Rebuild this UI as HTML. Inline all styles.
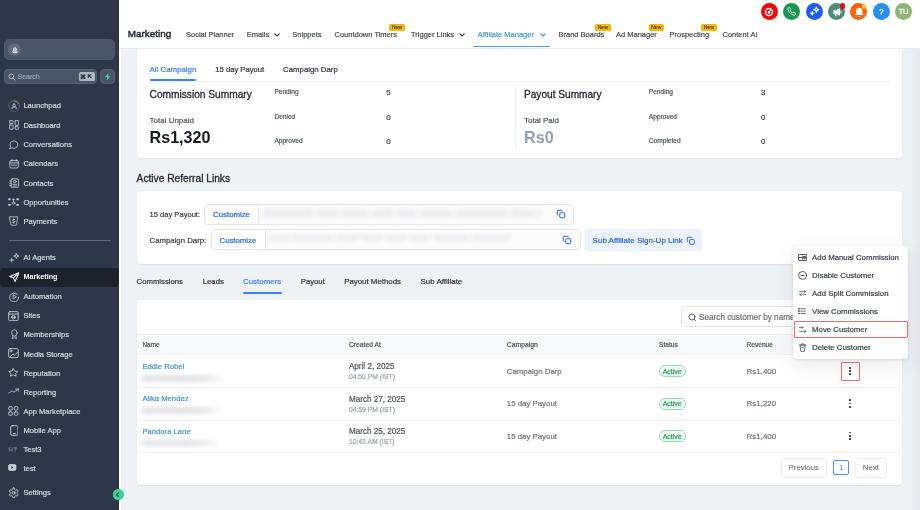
<!DOCTYPE html>
<html><head><meta charset="utf-8">
<style>
*{box-sizing:border-box;margin:0;padding:0}
html,body{width:920px;height:510px;overflow:hidden;background:#eff2f5}
body{position:relative;font-family:"Liberation Sans",sans-serif;color:#1f2937}
#root{position:absolute;left:0;top:0;width:920px;height:510px;will-change:transform;background:#eff2f5;overflow:hidden}
.a{position:absolute;white-space:nowrap;-webkit-text-stroke-width:0.2px}
</style></head><body>
<div id="root">
<div class="a" style="left:0.00px;top:0.00px;width:119.00px;height:510.00px;background:#2d3748"></div>
<div class="a" style="left:119.00px;top:0.00px;width:801.00px;height:49.00px;background:#fff;border-bottom:1px solid #e6e9ed"></div>
<div class="a" style="left:119.00px;top:49.00px;width:2.00px;height:461.00px;background:#fff"></div>
<div class="a" style="left:900.00px;top:49.00px;width:20.00px;height:461.00px;background:linear-gradient(90deg,#eff2f5 0%,#eef1f4 55%,#e3e6ea 100%)"></div>
<div class="a" style="left:4.00px;top:38.50px;width:111.00px;height:21.50px;background:#4a5567;border-radius:5px;border:1px solid #4f5a6c"></div>
<div class="a" style="left:8.10px;top:42.90px;width:13.40px;height:13.40px;border-radius:50%;background:#5f6a7b"></div>
<svg class="a" style="left:10.80px;top:45.60px" width="8" height="8" viewBox="0 0 24 24" ><path d="M7.5 9.5a4.5 4.5 0 0 1 9 0v2.5a4.5 4.5 0 0 1-9 0z" fill="#aeb6c1" stroke="#e8ecf1" stroke-width="2.4"/><path d="M3 16.5c1 3.5 4.5 5.5 9 5.5s8-2 9-5.5c-1.5-.8-3-.8-4 .2-1.2 1.3-2.8 2-5 2s-3.8-.7-5-2c-1-1-2.5-1-4-.2z" fill="#e8ecf1"/></svg>
<div class="a" style="left:4.00px;top:69.00px;width:93.00px;height:15.00px;background:#4a5567;border-radius:4px;border:1px solid #566173"></div>
<svg class="a" style="left:7.50px;top:72.50px" width="8" height="8" viewBox="0 0 24 24" fill="none" stroke="#c5ccd6" stroke-width="2.6" stroke-linecap="round"><circle cx="10" cy="10" r="7"/><path d="m21 21-6-6"/></svg>
<div class="a" style="left:17.50px;top:73px;font-size:7px;line-height:7px;color:#98a2af;font-weight:normal;-webkit-text-stroke-width:0.2px;">Search</div>
<div class="a" style="left:79.00px;top:72.00px;width:15.50px;height:9.00px;background:#aeb6c1;border-radius:1.5px"></div>
<div class="a" style="left:80.3px;top:72px;font-size:6.3px;line-height:9px;color:#1f2733;-webkit-text-stroke-width:0.35px">&#8984;</div>
<div class="a" style="left:87.5px;top:72px;font-size:6px;line-height:9px;color:#1f2733;font-weight:bold">K</div>
<div class="a" style="left:100.00px;top:69.00px;width:15.00px;height:15.00px;background:#4a5567;border-radius:4px;border:1px solid #566173"></div>
<svg class="a" style="left:103.80px;top:72.80px" width="7.4" height="7.4" viewBox="0 0 16 16" ><path d="M10 0 2 9h5l-1 7 8-9H9z" fill="#3ddc97"/></svg>
<div class="a" style="left:0.00px;top:267.60px;width:119.00px;height:19.00px;background:#1c212c;border-radius:4px"></div>
<div class="a" style="left:8.50px;top:239.50px;width:102.00px;height:1.00px;background:#5d6878"></div>
<svg class="a" style="left:7.89px;top:100.09px" width="12.22" height="12.22" viewBox="0 0 24 24" fill="none" stroke="#c9cfd8" stroke-width="2.0" stroke-linecap="round" stroke-linejoin="round" preserveAspectRatio="none"><circle cx="12" cy="12" r="10.5" stroke="#5c687a" stroke-width="1.5"/><path d="M12 1.5A10.5 10.5 0 0 1 21.4 7.3" stroke="#e0833a" stroke-width="1.7"/><path d="M12 5.5c2.3 1.7 3.2 4.2 3.2 6.8l-.8 2.7h-4.8l-.8-2.7c0-2.6.9-5.1 3.2-6.8z" fill="#939cab" stroke="none"/><path d="M8.8 12.5 6.5 15v2.5h3zM15.2 12.5l2.3 2.5v2.5h-3z" fill="#939cab" stroke="none"/><circle cx="12" cy="10.5" r="1.3" fill="#2d3748" stroke="none"/></svg>
<div class="a" style="left:23.40px;top:102px;font-size:7.6px;line-height:7.6px;color:#d5dae1;font-weight:normal;-webkit-text-stroke-width:0.2px;">Launchpad</div>
<svg class="a" style="left:8.67px;top:120.49px" width="10.25" height="9.82" viewBox="0 0 24 24" fill="none" stroke="#c9cfd8" stroke-width="2.0" stroke-linecap="round" stroke-linejoin="round" preserveAspectRatio="none"><rect x="1.5" y="1.5" width="8" height="7" rx="0.8"/><rect x="1.5" y="12" width="8" height="10.5" rx="0.8"/><rect x="14.5" y="1.5" width="8" height="11.5" rx="0.8"/><rect x="14.5" y="16.5" width="8" height="6" rx="0.8"/></svg>
<div class="a" style="left:23.40px;top:122px;font-size:7.6px;line-height:7.6px;color:#d5dae1;font-weight:normal;-webkit-text-stroke-width:0.2px;">Dashboard</div>
<svg class="a" style="left:9.09px;top:139.71px" width="9.82" height="9.38" viewBox="0 0 24 24" fill="none" stroke="#c9cfd8" stroke-width="2.0" stroke-linecap="round" stroke-linejoin="round" preserveAspectRatio="none"><path d="M7.9 20.5A9.5 9.5 0 1 0 3.6 16.4L1.5 22.5Z"/></svg>
<div class="a" style="left:23.40px;top:141px;font-size:7.6px;line-height:7.6px;color:#d5dae1;font-weight:normal;-webkit-text-stroke-width:0.2px;">Conversations</div>
<svg class="a" style="left:8.67px;top:159.29px" width="10.25" height="9.82" viewBox="0 0 24 24" fill="none" stroke="#c9cfd8" stroke-width="2.0" stroke-linecap="round" stroke-linejoin="round" preserveAspectRatio="none"><rect x="2" y="3.5" width="20" height="18.5" rx="3.5"/><path d="M7 1.5v4M17 1.5v4M2 9.5h20M6 15h12"/></svg>
<div class="a" style="left:23.40px;top:160px;font-size:7.6px;line-height:7.6px;color:#d5dae1;font-weight:normal;-webkit-text-stroke-width:0.2px;">Calendars</div>
<svg class="a" style="left:8.67px;top:177.65px" width="10.25" height="10.8" viewBox="0 0 24 24" fill="none" stroke="#c9cfd8" stroke-width="2.0" stroke-linecap="round" stroke-linejoin="round" preserveAspectRatio="none"><rect x="5" y="2" width="17" height="20" rx="2.5"/><ellipse cx="13.5" cy="8" rx="3.5" ry="2.2"/><path d="M9 14h9M9 18h9M1.5 6.5h3M1.5 11.5h3M1.5 16.5h3"/></svg>
<div class="a" style="left:23.40px;top:180px;font-size:7.6px;line-height:7.6px;color:#d5dae1;font-weight:normal;-webkit-text-stroke-width:0.2px;">Contacts</div>
<svg class="a" style="left:8.24px;top:198.16px" width="11.13" height="8.18" viewBox="0 0 24 24" fill="none" stroke="#c9cfd8" stroke-width="2.0" stroke-linecap="round" stroke-linejoin="round" preserveAspectRatio="none"><rect x="0.5" y="1" width="5.5" height="5.5" rx="1.2" fill="#c9cfd8" stroke="none"/><rect x="18" y="1" width="5.5" height="5.5" rx="1.2" fill="#c9cfd8" stroke="none"/><rect x="0.5" y="17.5" width="5.5" height="5.5" rx="1.2" fill="#c9cfd8" stroke="none"/><rect x="18" y="17.5" width="5.5" height="5.5" rx="1.2" fill="#c9cfd8" stroke="none"/><circle cx="12" cy="4" r="2.6" fill="#c9cfd8" stroke="none"/><circle cx="12" cy="15" r="3.2"/><path d="M12 6.5v5"/></svg>
<div class="a" style="left:23.40px;top:199px;font-size:7.6px;line-height:7.6px;color:#d5dae1;font-weight:normal;-webkit-text-stroke-width:0.2px;">Opportunities</div>
<svg class="a" style="left:9.11px;top:216.49px" width="9.38" height="9.93" viewBox="0 0 24 24" fill="none" stroke="#c9cfd8" stroke-width="2.0" stroke-linecap="round" stroke-linejoin="round" preserveAspectRatio="none"><path d="M2 2h20l-2.5 19a1.5 1.5 0 0 1-1.5 1.3H6a1.5 1.5 0 0 1-1.5-1.3z"/><path d="M14.5 8.5h-3.5a1.7 1.7 0 0 0 0 3.4h2a1.7 1.7 0 0 1 0 3.4h-3.5M12 6.5v2M12 15.3v2"/></svg>
<div class="a" style="left:23.40px;top:218px;font-size:7.6px;line-height:7.6px;color:#d5dae1;font-weight:normal;-webkit-text-stroke-width:0.2px;">Payments</div>
<svg class="a" style="left:8.55px;top:253.10px" width="10.69" height="9.6" viewBox="0 0 24 24" fill="none" stroke="#c9cfd8" stroke-width="2.0" stroke-linecap="round" stroke-linejoin="round" preserveAspectRatio="none"><path d="M16.5 1.5l1.6 4.4 4.4 1.6-4.4 1.6-1.6 4.4-1.6-4.4-4.4-1.6 4.4-1.6z"/><path d="M6 13v9.5M1.5 17.7h9"/></svg>
<div class="a" style="left:23.40px;top:254px;font-size:7.6px;line-height:7.6px;color:#d5dae1;font-weight:normal;-webkit-text-stroke-width:0.2px;">AI Agents</div>
<svg class="a" style="left:8.55px;top:271.78px" width="10.69" height="10.15" viewBox="0 0 24 24" fill="none" stroke="#ffffff" stroke-width="2.3" stroke-linecap="round" stroke-linejoin="round" preserveAspectRatio="none"><path d="M22.5 1.5 1.5 10.5l8.5 3.5 3.5 8.5z"/><path d="M22.5 1.5 10 14"/></svg>
<div class="a" style="left:23.50px;top:273px;font-size:7.2px;line-height:7.2px;color:#ffffff;font-weight:bold;-webkit-text-stroke-width:0px;">Marketing</div>
<svg class="a" style="left:8.57px;top:291.58px" width="10.36" height="10.15" viewBox="0 0 24 24" fill="none" stroke="#c9cfd8" stroke-width="2.0" stroke-linecap="round" stroke-linejoin="round" preserveAspectRatio="none"><path d="M19.5 5.5A10.5 10.5 0 1 0 22.5 12"/><path d="M9.5 7.5v9l7-4.5z"/></svg>
<div class="a" style="left:23.40px;top:293px;font-size:7.6px;line-height:7.6px;color:#d5dae1;font-weight:normal;-webkit-text-stroke-width:0.2px;">Automation</div>
<svg class="a" style="left:8.35px;top:310.57px" width="10.91" height="10.36" viewBox="0 0 24 24" fill="none" stroke="#c9cfd8" stroke-width="2.0" stroke-linecap="round" stroke-linejoin="round" preserveAspectRatio="none"><rect x="1.5" y="1.5" width="21" height="21" rx="2.5"/><path d="M1.5 7h21"/><circle cx="12" cy="14.5" r="4"/><path d="M8 14.5h8"/></svg>
<div class="a" style="left:23.40px;top:312px;font-size:7.6px;line-height:7.6px;color:#d5dae1;font-weight:normal;-webkit-text-stroke-width:0.2px;">Sites</div>
<svg class="a" style="left:9.54px;top:329.16px" width="8.73" height="10.47" viewBox="0 0 24 24" fill="none" stroke="#c9cfd8" stroke-width="2.0" stroke-linecap="round" stroke-linejoin="round" preserveAspectRatio="none"><circle cx="12" cy="9" r="7.5"/><path d="M8 15.5 6 22.5l6-3 6 3-2-7"/></svg>
<div class="a" style="left:23.40px;top:331px;font-size:7.6px;line-height:7.6px;color:#d5dae1;font-weight:normal;-webkit-text-stroke-width:0.2px;">Memberships</div>
<svg class="a" style="left:8.35px;top:348.47px" width="10.91" height="10.25" viewBox="0 0 24 24" fill="none" stroke="#c9cfd8" stroke-width="2.0" stroke-linecap="round" stroke-linejoin="round" preserveAspectRatio="none"><rect x="1.5" y="1.5" width="21" height="21" rx="3"/><path d="M7 4.5v5M4.5 7h5M4 21l7-7 3 3 7-7"/></svg>
<div class="a" style="left:23.40px;top:351px;font-size:7.6px;line-height:7.6px;color:#d5dae1;font-weight:normal;-webkit-text-stroke-width:0.2px;">Media Storage</div>
<svg class="a" style="left:8.36px;top:368.41px" width="10.58" height="9.27" viewBox="0 0 24 24" fill="none" stroke="#c9cfd8" stroke-width="2.0" stroke-linecap="round" stroke-linejoin="round" preserveAspectRatio="none"><path d="M12 1.5l3.2 6.5 7.2 1-5.2 5.1 1.2 7.1L12 17.8l-6.4 3.4 1.2-7.1L1.6 9l7.2-1z"/></svg>
<div class="a" style="left:23.40px;top:370px;font-size:7.6px;line-height:7.6px;color:#d5dae1;font-weight:normal;-webkit-text-stroke-width:0.2px;">Reputation</div>
<svg class="a" style="left:8.02px;top:388.39px" width="11.45" height="7.42" viewBox="0 0 24 24" fill="none" stroke="#c9cfd8" stroke-width="2.0" stroke-linecap="round" stroke-linejoin="round" preserveAspectRatio="none"><path d="M1.5 16.5l7-7 4 4 10-10M15.5 3.5h7v7"/></svg>
<div class="a" style="left:23.40px;top:389px;font-size:7.6px;line-height:7.6px;color:#d5dae1;font-weight:normal;-webkit-text-stroke-width:0.2px;">Reporting</div>
<svg class="a" style="left:8.36px;top:406.49px" width="10.58" height="9.93" viewBox="0 0 24 24" fill="none" stroke="#c9cfd8" stroke-width="2.0" stroke-linecap="round" stroke-linejoin="round" preserveAspectRatio="none"><rect x="1.5" y="1.5" width="8.5" height="8.5" rx="3"/><rect x="14" y="1.5" width="8.5" height="8.5" rx="3"/><rect x="1.5" y="14" width="8.5" height="8.5" rx="3"/><rect x="14" y="14" width="8.5" height="8.5" rx="3"/></svg>
<div class="a" style="left:23.40px;top:408px;font-size:7.6px;line-height:7.6px;color:#d5dae1;font-weight:normal;-webkit-text-stroke-width:0.2px;">App Marketplace</div>
<svg class="a" style="left:9.77px;top:425.04px" width="8.72" height="11.02" viewBox="0 0 18 24" fill="none" stroke="#c9cfd8" stroke-width="2.0" stroke-linecap="round" stroke-linejoin="round" preserveAspectRatio="none"><rect x="1.5" y="1.5" width="15" height="21" rx="3"/><path d="M7 18.5h4"/></svg>
<div class="a" style="left:23.40px;top:427px;font-size:7.6px;line-height:7.6px;color:#d5dae1;font-weight:normal;-webkit-text-stroke-width:0.2px;">Mobile App</div>
<div class="a" style="left:7.9px;top:446.2px;font-size:5px;line-height:7px;color:#8c95a2;-webkit-text-stroke-width:0">知乎</div>
<div class="a" style="left:23.40px;top:446px;font-size:7.6px;line-height:7.6px;color:#d5dae1;font-weight:normal;-webkit-text-stroke-width:0.2px;">Test3</div>
<svg class="a" style="left:8.05px;top:464.14px" width="8.51" height="7.02" viewBox="0 0 24 19.4" fill="none" stroke="#c9cfd8" stroke-width="2.0" stroke-linecap="round" stroke-linejoin="round" preserveAspectRatio="none"><rect x="1.5" y="1.5" width="21" height="16.4" rx="4" fill="#c9cfd8"/><path d="M9.5 5.5v8l6-4z" fill="#2d3748" stroke="none"/></svg>
<div class="a" style="left:23.40px;top:465px;font-size:7.6px;line-height:7.6px;color:#d5dae1;font-weight:normal;-webkit-text-stroke-width:0.2px;">test</div>
<svg class="a" style="left:7.93px;top:486.71px" width="11.35" height="11.78" viewBox="0 0 24 24" fill="none" stroke="#c9cfd8" stroke-width="2.0" stroke-linecap="round" stroke-linejoin="round" preserveAspectRatio="none"><path d="M12.22 2h-.44a2 2 0 0 0-2 2v.18a2 2 0 0 1-1 1.73l-.43.25a2 2 0 0 1-2 0l-.15-.08a2 2 0 0 0-2.73.73l-.22.38a2 2 0 0 0 .73 2.73l.15.1a2 2 0 0 1 1 1.72v.51a2 2 0 0 1-1 1.74l-.15.09a2 2 0 0 0-.73 2.730l.22.38a2 2 0 0 0 2.73.73l.15-.08a2 2 0 0 1 2 0l.43.25a2 2 0 0 1 1 1.73V20a2 2 0 0 0 2 2h.44a2 2 0 0 0 2-2v-.18a2 2 0 0 1 1-1.73l.43-.25a2 2 0 0 1 2 0l.15.08a2 2 0 0 0 2.73-.73l.22-.39a2 2 0 0 0-.73-2.73l-.15-.08a2 2 0 0 1-1-1.74v-.5a2 2 0 0 1 1-1.74l.15-.09a2 2 0 0 0 .73-2.73l-.22-.38a2 2 0 0 0-2.73-.73l-.15.08a2 2 0 0 1-2 0l-.43-.25a2 2 0 0 1-1-1.73V4a2 2 0 0 0-2-2z"/><circle cx="12" cy="12" r="3"/></svg>
<div class="a" style="left:23.40px;top:489px;font-size:7.6px;line-height:7.6px;color:#d5dae1;font-weight:normal;-webkit-text-stroke-width:0.2px;">Settings</div>
<div class="a" style="left:112.60px;top:488.80px;width:11.20px;height:11.20px;border-radius:50%;background:#38d39b;box-shadow:0 0 1px rgba(255,255,255,0.5)"></div>
<svg class="a" style="left:115.00px;top:491.80px" width="5.4" height="5.4" viewBox="0 0 12 12" fill="none" stroke="#0d5c40" stroke-width="2.8" stroke-linecap="round" stroke-linejoin="round"><path d="M8 1.5 3.5 6 8 10.5"/></svg>
<div class="a" style="left:127.80px;top:29px;font-size:9.9px;line-height:9.9px;color:#1e2633;font-weight:normal;-webkit-text-stroke-width:0.45px;">Marketing</div>
<div class="a" style="left:186.00px;top:31px;font-size:7.5px;line-height:7.5px;color:#444c59;font-weight:normal;-webkit-text-stroke-width:0.2px;">Social Planner</div>
<div class="a" style="left:246.70px;top:31px;font-size:7.5px;line-height:7.5px;color:#444c59;font-weight:normal;-webkit-text-stroke-width:0.2px;">Emails</div>
<svg class="a" style="left:274.20px;top:33.00px" width="6" height="4" viewBox="0 0 12 8" fill="none" stroke="#444c59" stroke-width="2.2" stroke-linecap="round" stroke-linejoin="round"><path d="M1.5 1.5 6 6l4.5-4.5"/></svg>
<div class="a" style="left:292.30px;top:31px;font-size:7.5px;line-height:7.5px;color:#444c59;font-weight:normal;-webkit-text-stroke-width:0.2px;">Snippets</div>
<div class="a" style="left:334.50px;top:31px;font-size:7.5px;line-height:7.5px;color:#444c59;font-weight:normal;-webkit-text-stroke-width:0.2px;">Countdown Timers</div>
<div class="a" style="left:411.00px;top:31px;font-size:7.5px;line-height:7.5px;color:#444c59;font-weight:normal;-webkit-text-stroke-width:0.2px;">Trigger Links</div>
<svg class="a" style="left:459.00px;top:33.00px" width="6" height="4" viewBox="0 0 12 8" fill="none" stroke="#444c59" stroke-width="2.2" stroke-linecap="round" stroke-linejoin="round"><path d="M1.5 1.5 6 6l4.5-4.5"/></svg>
<div class="a" style="left:477.80px;top:31px;font-size:7.5px;line-height:7.5px;color:#3f9ae0;font-weight:normal;-webkit-text-stroke-width:0.2px;">Affiliate Manager</div>
<svg class="a" style="left:539.60px;top:33.00px" width="6" height="4" viewBox="0 0 12 8" fill="none" stroke="#3f9ae0" stroke-width="2.2" stroke-linecap="round" stroke-linejoin="round"><path d="M1.5 1.5 6 6l4.5-4.5"/></svg>
<div class="a" style="left:558.50px;top:31px;font-size:7.5px;line-height:7.5px;color:#444c59;font-weight:normal;-webkit-text-stroke-width:0.2px;">Brand Boards</div>
<div class="a" style="left:616.00px;top:31px;font-size:7.5px;line-height:7.5px;color:#444c59;font-weight:normal;-webkit-text-stroke-width:0.2px;">Ad Manager</div>
<div class="a" style="left:669.50px;top:31px;font-size:7.5px;line-height:7.5px;color:#444c59;font-weight:normal;-webkit-text-stroke-width:0.2px;">Prospecting</div>
<div class="a" style="left:722.50px;top:31px;font-size:7.5px;line-height:7.5px;color:#444c59;font-weight:normal;-webkit-text-stroke-width:0.2px;">Content AI</div>
<div class="a" style="left:389.20px;top:24.30px;width:15.50px;height:6.40px;background:#f7b800;border-radius:1.5px"></div>
<div class="a" style="left:389.2px;top:24.3px;width:15.5px;text-align:center;font-size:5px;line-height:6.4px;color:#3a3000;-webkit-text-stroke-width:0.1px">New</div>
<div class="a" style="left:595.00px;top:24.30px;width:15.50px;height:6.40px;background:#f7b800;border-radius:1.5px"></div>
<div class="a" style="left:595.0px;top:24.3px;width:15.5px;text-align:center;font-size:5px;line-height:6.4px;color:#3a3000;-webkit-text-stroke-width:0.1px">New</div>
<div class="a" style="left:648.50px;top:24.30px;width:15.50px;height:6.40px;background:#f7b800;border-radius:1.5px"></div>
<div class="a" style="left:648.5px;top:24.3px;width:15.5px;text-align:center;font-size:5px;line-height:6.4px;color:#3a3000;-webkit-text-stroke-width:0.1px">New</div>
<div class="a" style="left:701.00px;top:24.30px;width:15.50px;height:6.40px;background:#f7b800;border-radius:1.5px"></div>
<div class="a" style="left:701.0px;top:24.3px;width:15.5px;text-align:center;font-size:5px;line-height:6.4px;color:#3a3000;-webkit-text-stroke-width:0.1px">New</div>
<div class="a" style="left:473.30px;top:45.50px;width:76.60px;height:1.60px;background:#48a0e0"></div>
<div class="a" style="left:760.80px;top:3.30px;width:17.20px;height:17.20px;border-radius:50%;background:#fa0000"></div>
<svg class="a" style="left:764.40px;top:6.90px" width="10" height="10" viewBox="0 0 24 24" fill="none" stroke="#fff" stroke-width="3.4" stroke-linecap="round"><circle cx="12" cy="12" r="8.5"/><path d="M12 13l3.5-5.5" stroke-width="2.6"/><circle cx="12" cy="13" r="1.6" fill="#fff"/></svg>
<div class="a" style="left:783.20px;top:3.30px;width:17.20px;height:17.20px;border-radius:50%;background:#179a4e"></div>
<svg class="a" style="left:787.30px;top:7.40px" width="9" height="9" viewBox="0 0 24 24" fill="none" stroke="#fff" stroke-width="2.2" stroke-linejoin="round"><path d="M22 16.9v3a2 2 0 0 1-2.2 2 19.8 19.8 0 0 1-8.6-3.1 19.5 19.5 0 0 1-6-6A19.8 19.8 0 0 1 2.1 4.2 2 2 0 0 1 4.1 2h3a2 2 0 0 1 2 1.7c.1 1 .4 1.9.7 2.8a2 2 0 0 1-.5 2.1L8 9.9a16 16 0 0 0 6 6l1.3-1.3a2 2 0 0 1 2.1-.4c.9.3 1.8.6 2.8.7a2 2 0 0 1 1.7 2z"/></svg>
<div class="a" style="left:805.60px;top:3.30px;width:17.20px;height:17.20px;border-radius:50%;background:#1d5cf2"></div>
<svg class="a" style="left:808.70px;top:6.40px" width="11" height="11" viewBox="0 0 24 24" fill="none" stroke="#fff" stroke-width="2.2" stroke-linejoin="round"><path d="M16 2l1.5 4.5L22 8l-4.5 1.5L16 14l-1.5-4.5L10 8l4.5-1.5z"/><path d="M7 12l1 3 3 1-3 1-1 3-1-3-3-1 3-1z"/></svg>
<div class="a" style="left:827.90px;top:3.30px;width:17.20px;height:17.20px;border-radius:50%;background:#4b8e78"></div>
<svg class="a" style="left:831.50px;top:6.90px" width="10" height="10" viewBox="0 0 24 24" ><path d="M3 8h5l11-5v18L8 16H3z" fill="#fff"/><path d="M6 16l2 6h3.5l-2-6z" fill="#fff"/><path d="M21 9v6" stroke="#fff" stroke-width="2"/></svg>
<div class="a" style="left:850.20px;top:3.30px;width:17.20px;height:17.20px;border-radius:50%;background:#ff610d"></div>
<svg class="a" style="left:853.55px;top:6.65px" width="10.5" height="10.5" viewBox="0 0 24 24" ><path d="M12 1.5a7 7 0 0 0-7 7v6.5l-2.5 3.5h19L19 15V8.5a7 7 0 0 0-7-7z" fill="#fff"/><path d="M9.5 20.5a2.5 2.5 0 0 0 5 0z" fill="#fff"/></svg>
<div class="a" style="left:872.80px;top:3.30px;width:17.20px;height:17.20px;border-radius:50%;background:#2590f2"></div>
<div class="a" style="left:894.90px;top:3.30px;width:17.20px;height:17.20px;border-radius:50%;background:#8ab672"></div>
<div class="a" style="left:876.4px;top:6px;width:10px;text-align:center;font-size:8.6px;line-height:12px;font-weight:bold;color:#fff;-webkit-text-stroke-width:0">?</div>
<div class="a" style="left:895px;top:7px;width:17px;text-align:center;font-size:7.6px;line-height:10px;color:#f2f7ef;-webkit-text-stroke-width:0.35px">TU</div>
<div class="a" style="left:839.60px;top:3.30px;width:5.40px;height:5.40px;border-radius:50%;background:#f2000f"></div>
<div class="a" style="left:862.00px;top:4.30px;width:4.40px;height:4.40px;border-radius:50%;background:#f7c520"></div>
<div class="a" style="left:136.70px;top:49.00px;width:765.70px;height:109.00px;background:#fff;border-radius:0 0 4px 4px;box-shadow:0 1px 2px rgba(16,24,40,0.07)"></div>
<div class="a" style="left:149.60px;top:66px;font-size:7.85px;line-height:7.85px;color:#3b82f6;font-weight:normal;-webkit-text-stroke-width:0.2px;">All Campaign</div>
<div class="a" style="left:215.30px;top:66px;font-size:7.65px;line-height:7.65px;color:#2b3340;font-weight:normal;-webkit-text-stroke-width:0.2px;">15 day Payout</div>
<div class="a" style="left:283.10px;top:66px;font-size:7.82px;line-height:7.82px;color:#2b3340;font-weight:normal;-webkit-text-stroke-width:0.2px;">Campaign Darp</div>
<div class="a" style="left:149.60px;top:78.50px;width:46.60px;height:2.00px;background:#3b82f6;border-radius:1px"></div>
<div class="a" style="left:149.60px;top:80.50px;width:740.00px;height:1.00px;background:#eef0f3"></div>
<div class="a" style="left:149.60px;top:90px;font-size:10.16px;line-height:10.16px;color:#1e2633;font-weight:normal;-webkit-text-stroke-width:0.3px;">Commission Summary</div>
<div class="a" style="left:149.60px;top:117px;font-size:7.97px;line-height:7.97px;color:#4b5563;font-weight:normal;-webkit-text-stroke-width:0.2px;">Total Unpaid</div>
<div class="a" style="left:149.60px;top:129px;font-size:16.1px;line-height:16.1px;color:#111827;font-weight:bold;-webkit-text-stroke-width:0px;">Rs1,320</div>
<div class="a" style="left:274.40px;top:89px;font-size:6.6px;line-height:6.6px;color:#4b5563;font-weight:normal;-webkit-text-stroke-width:0.2px;">Pending</div>
<div class="a" style="left:386.30px;top:89px;font-size:7.9px;line-height:7.9px;color:#374151;font-weight:normal;-webkit-text-stroke-width:0.2px;">5</div>
<div class="a" style="left:274.40px;top:114px;font-size:6.6px;line-height:6.6px;color:#4b5563;font-weight:normal;-webkit-text-stroke-width:0.2px;">Denied</div>
<div class="a" style="left:386.30px;top:114px;font-size:7.9px;line-height:7.9px;color:#374151;font-weight:normal;-webkit-text-stroke-width:0.2px;">0</div>
<div class="a" style="left:274.40px;top:138px;font-size:6.6px;line-height:6.6px;color:#4b5563;font-weight:normal;-webkit-text-stroke-width:0.2px;">Approved</div>
<div class="a" style="left:386.30px;top:138px;font-size:7.9px;line-height:7.9px;color:#374151;font-weight:normal;-webkit-text-stroke-width:0.2px;">0</div>
<div class="a" style="left:514.60px;top:87.30px;width:1.00px;height:59.40px;background:#e9ecf0"></div>
<div class="a" style="left:524.00px;top:90px;font-size:10.12px;line-height:10.12px;color:#1e2633;font-weight:normal;-webkit-text-stroke-width:0.3px;">Payout Summary</div>
<div class="a" style="left:524.00px;top:117px;font-size:7.97px;line-height:7.97px;color:#4b5563;font-weight:normal;-webkit-text-stroke-width:0.2px;">Total Paid</div>
<div class="a" style="left:524.00px;top:129px;font-size:16.2px;line-height:16.2px;color:#94a3b8;font-weight:bold;-webkit-text-stroke-width:0px;">Rs0</div>
<div class="a" style="left:648.80px;top:89px;font-size:6.6px;line-height:6.6px;color:#4b5563;font-weight:normal;-webkit-text-stroke-width:0.2px;">Pending</div>
<div class="a" style="left:761.00px;top:89px;font-size:7.9px;line-height:7.9px;color:#374151;font-weight:normal;-webkit-text-stroke-width:0.2px;">3</div>
<div class="a" style="left:648.80px;top:114px;font-size:6.6px;line-height:6.6px;color:#4b5563;font-weight:normal;-webkit-text-stroke-width:0.2px;">Approved</div>
<div class="a" style="left:761.00px;top:114px;font-size:7.9px;line-height:7.9px;color:#374151;font-weight:normal;-webkit-text-stroke-width:0.2px;">0</div>
<div class="a" style="left:648.80px;top:138px;font-size:6.6px;line-height:6.6px;color:#4b5563;font-weight:normal;-webkit-text-stroke-width:0.2px;">Completed</div>
<div class="a" style="left:761.00px;top:138px;font-size:7.9px;line-height:7.9px;color:#374151;font-weight:normal;-webkit-text-stroke-width:0.2px;">0</div>
<div class="a" style="left:136.60px;top:174px;font-size:10.2px;line-height:10.2px;color:#1e2633;font-weight:normal;-webkit-text-stroke-width:0.3px;">Active Referral Links</div>
<div class="a" style="left:136.70px;top:191.00px;width:765.70px;height:73.00px;background:#fff;border-radius:4px;box-shadow:0 1px 2px rgba(16,24,40,0.07)"></div>
<div class="a" style="left:149.50px;top:211px;font-size:7.58px;line-height:7.58px;color:#374151;font-weight:normal;-webkit-text-stroke-width:0.2px;">15 day Payout:</div>
<div class="a" style="left:204.40px;top:203.70px;width:370.00px;height:21.00px;background:#fff;border:1px solid #e3e6ea;border-radius:4px"></div>
<div class="a" style="left:258.30px;top:204.70px;width:315.00px;height:19.00px;background:#fbfbfc;border-left:1px solid #e3e6ea;border-radius:0 3px 3px 0"></div>
<div class="a" style="left:213.10px;top:211px;font-size:7.81px;line-height:7.81px;color:#2563eb;font-weight:normal;-webkit-text-stroke-width:0.2px;">Customize</div>
<div class="a" style="left:262.00px;top:210.30px;width:52.25px;height:6.50px;background:#eaecef;border-radius:3px;filter:blur(2.2px)"></div>
<div class="a" style="left:316.85px;top:210.30px;width:22.00px;height:6.50px;background:#eaecef;border-radius:3px;filter:blur(2.2px)"></div>
<div class="a" style="left:341.45px;top:210.30px;width:27.64px;height:6.50px;background:#eaecef;border-radius:3px;filter:blur(2.2px)"></div>
<div class="a" style="left:371.38px;top:210.30px;width:22.42px;height:6.50px;background:#eaecef;border-radius:3px;filter:blur(2.2px)"></div>
<div class="a" style="left:396.74px;top:210.30px;width:20.36px;height:6.50px;background:#eaecef;border-radius:3px;filter:blur(2.2px)"></div>
<div class="a" style="left:419.98px;top:210.30px;width:33.01px;height:6.50px;background:#eaecef;border-radius:3px;filter:blur(2.2px)"></div>
<div class="a" style="left:454.77px;top:210.30px;width:52.95px;height:6.50px;background:#eaecef;border-radius:3px;filter:blur(2.2px)"></div>
<div class="a" style="left:510.07px;top:210.30px;width:24.99px;height:6.50px;background:#eaecef;border-radius:3px;filter:blur(2.2px)"></div>
<div class="a" style="left:537.02px;top:210.30px;width:2.98px;height:6.50px;background:#eaecef;border-radius:3px;filter:blur(2.2px)"></div>
<svg class="a" style="left:555.50px;top:209.00px" width="10" height="10" viewBox="0 0 24 24" fill="none" stroke="#2563eb" stroke-width="2.4" stroke-linejoin="round"><rect x="9" y="9" width="12" height="12" rx="2.5"/><path d="M15 5.5V5a2 2 0 0 0-2-2H5a2 2 0 0 0-2 2v8a2 2 0 0 0 2 2h.5"/></svg>
<div class="a" style="left:149.50px;top:237px;font-size:7.8px;line-height:7.8px;color:#374151;font-weight:normal;-webkit-text-stroke-width:0.2px;">Campaign Darp:</div>
<div class="a" style="left:210.80px;top:229.30px;width:370.00px;height:21.00px;background:#fff;border:1px solid #e3e6ea;border-radius:4px"></div>
<div class="a" style="left:265.00px;top:230.30px;width:314.80px;height:19.00px;background:#fbfbfc;border-left:1px solid #e3e6ea;border-radius:0 3px 3px 0"></div>
<div class="a" style="left:219.50px;top:237px;font-size:7.81px;line-height:7.81px;color:#2563eb;font-weight:normal;-webkit-text-stroke-width:0.2px;">Customize</div>
<div class="a" style="left:268.00px;top:234.80px;width:22.20px;height:6.50px;background:#eaecef;border-radius:3px;filter:blur(2.2px)"></div>
<div class="a" style="left:292.45px;top:234.80px;width:40.45px;height:6.50px;background:#eaecef;border-radius:3px;filter:blur(2.2px)"></div>
<div class="a" style="left:334.65px;top:234.80px;width:24.35px;height:6.50px;background:#eaecef;border-radius:3px;filter:blur(2.2px)"></div>
<div class="a" style="left:361.42px;top:234.80px;width:22.14px;height:6.50px;background:#eaecef;border-radius:3px;filter:blur(2.2px)"></div>
<div class="a" style="left:385.85px;top:234.80px;width:22.35px;height:6.50px;background:#eaecef;border-radius:3px;filter:blur(2.2px)"></div>
<div class="a" style="left:410.33px;top:234.80px;width:19.11px;height:6.50px;background:#eaecef;border-radius:3px;filter:blur(2.2px)"></div>
<div class="a" style="left:431.85px;top:234.80px;width:36.70px;height:6.50px;background:#eaecef;border-radius:3px;filter:blur(2.2px)"></div>
<div class="a" style="left:471.25px;top:234.80px;width:39.13px;height:6.50px;background:#eaecef;border-radius:3px;filter:blur(2.2px)"></div>
<svg class="a" style="left:561.50px;top:234.50px" width="10" height="10" viewBox="0 0 24 24" fill="none" stroke="#2563eb" stroke-width="2.4" stroke-linejoin="round"><rect x="9" y="9" width="12" height="12" rx="2.5"/><path d="M15 5.5V5a2 2 0 0 0-2-2H5a2 2 0 0 0-2 2v8a2 2 0 0 0 2 2h.5"/></svg>
<div class="a" style="left:585.10px;top:229.10px;width:117.10px;height:21.70px;background:#edf3fe;border-radius:4px"></div>
<div class="a" style="left:592.60px;top:237px;font-size:8.0px;line-height:8.0px;color:#2563eb;font-weight:normal;-webkit-text-stroke-width:0.2px;">Sub Affiliate Sign-Up Link</div>
<svg class="a" style="left:685.50px;top:235.50px" width="9.5" height="9.5" viewBox="0 0 24 24" fill="none" stroke="#2563eb" stroke-width="2.4" stroke-linejoin="round"><rect x="9" y="9" width="12" height="12" rx="2.5"/><path d="M15 5.5V5a2 2 0 0 0-2-2H5a2 2 0 0 0-2 2v8a2 2 0 0 0 2 2h.5"/></svg>
<div class="a" style="left:136.60px;top:278px;font-size:7.73px;line-height:7.73px;color:#2b3340;font-weight:normal;-webkit-text-stroke-width:0.2px;">Commissions</div>
<div class="a" style="left:202.70px;top:278px;font-size:7.78px;line-height:7.78px;color:#2b3340;font-weight:normal;-webkit-text-stroke-width:0.2px;">Leads</div>
<div class="a" style="left:243.00px;top:278px;font-size:7.92px;line-height:7.92px;color:#3b82f6;font-weight:normal;-webkit-text-stroke-width:0.2px;">Customers</div>
<div class="a" style="left:300.80px;top:278px;font-size:7.71px;line-height:7.71px;color:#2b3340;font-weight:normal;-webkit-text-stroke-width:0.2px;">Payout</div>
<div class="a" style="left:344.20px;top:278px;font-size:7.86px;line-height:7.86px;color:#2b3340;font-weight:normal;-webkit-text-stroke-width:0.2px;">Payout Methods</div>
<div class="a" style="left:420.50px;top:278px;font-size:7.95px;line-height:7.95px;color:#2b3340;font-weight:normal;-webkit-text-stroke-width:0.2px;">Sub Affiliate</div>
<div class="a" style="left:243.00px;top:291.80px;width:38.50px;height:1.80px;background:#3b82f6;border-radius:1px"></div>
<div class="a" style="left:136.70px;top:300.00px;width:765.70px;height:185.00px;background:#fff;border-radius:4px;box-shadow:0 1px 2px rgba(16,24,40,0.07)"></div>
<div class="a" style="left:681.30px;top:306.30px;width:209.00px;height:21.20px;background:#fff;border:1px solid #e3e6ea;border-radius:4px"></div>
<svg class="a" style="left:688.20px;top:313.20px" width="8.6" height="8.6" viewBox="0 0 24 24" fill="none" stroke="#4b5563" stroke-width="2.5" stroke-linecap="round"><circle cx="11" cy="11" r="8.5"/><path d="m22 22-4.5-4.5"/></svg>
<div class="a" style="left:699.00px;top:314px;font-size:8.2px;line-height:8.2px;color:#6b7280;font-weight:normal;-webkit-text-stroke-width:0.2px;">Search customer by name</div>
<div class="a" style="left:136.70px;top:334.20px;width:765.70px;height:21.20px;background:#f8f9fb;border-top:1px solid #eef0f3;border-bottom:1px solid #eef0f3"></div>
<div class="a" style="left:142.40px;top:342px;font-size:6.5px;line-height:6.5px;color:#4b5563;font-weight:normal;-webkit-text-stroke-width:0.2px;">Name</div>
<div class="a" style="left:348.90px;top:342px;font-size:6.8px;line-height:6.8px;color:#4b5563;font-weight:normal;-webkit-text-stroke-width:0.2px;">Created At</div>
<div class="a" style="left:506.80px;top:342px;font-size:6.82px;line-height:6.82px;color:#4b5563;font-weight:normal;-webkit-text-stroke-width:0.2px;">Campaign</div>
<div class="a" style="left:658.90px;top:342px;font-size:6.74px;line-height:6.74px;color:#4b5563;font-weight:normal;-webkit-text-stroke-width:0.2px;">Status</div>
<div class="a" style="left:746.50px;top:342px;font-size:6.62px;line-height:6.62px;color:#4b5563;font-weight:normal;-webkit-text-stroke-width:0.2px;">Revenue</div>
<div class="a" style="left:142.40px;top:363px;font-size:7.7px;line-height:7.7px;color:#3d98d8;font-weight:normal;-webkit-text-stroke-width:0.2px;">Eddie Robel</div>
<div class="a" style="left:141.00px;top:375.00px;width:84.00px;height:6.50px;background:linear-gradient(90deg,#e3e6ea 0%,#dfe2e6 50%,#e6e8eb 80%,rgba(230,232,235,0) 100%);border-radius:3px;filter:blur(2px)"></div>
<div class="a" style="left:348.90px;top:363px;font-size:8.15px;line-height:8.15px;color:#4b5563;font-weight:normal;-webkit-text-stroke-width:0.2px;">April 2, 2025</div>
<div class="a" style="left:348.90px;top:374px;font-size:6.8px;line-height:6.8px;color:#9ca3af;font-weight:normal;-webkit-text-stroke-width:0.2px;">04:50 PM (IST)</div>
<div class="a" style="left:506.80px;top:368px;font-size:7.85px;line-height:7.85px;color:#6b7280;font-weight:normal;-webkit-text-stroke-width:0.2px;">Campaign Darp</div>
<div class="a" style="left:658.50px;top:365.30px;width:27.50px;height:12.00px;background:#effcf3;border:1px solid #8fe0aa;border-radius:6px"></div>
<div class="a" style="left:662.70px;top:368px;font-size:7.0px;line-height:7.0px;color:#1f9d55;font-weight:normal;-webkit-text-stroke-width:0.2px;">Active</div>
<div class="a" style="left:746.50px;top:368px;font-size:7.97px;line-height:7.97px;color:#6b7280;font-weight:normal;-webkit-text-stroke-width:0.2px;">Rs1,400</div>
<div class="a" style="left:849.30px;top:366.90px;width:1.60px;height:1.70px;background:#2a3241;border-radius:0.4px"></div>
<div class="a" style="left:849.30px;top:370.15px;width:1.60px;height:1.70px;background:#2a3241;border-radius:0.4px"></div>
<div class="a" style="left:849.30px;top:373.40px;width:1.60px;height:1.70px;background:#2a3241;border-radius:0.4px"></div>
<div class="a" style="left:136.70px;top:387.20px;width:765.70px;height:1.00px;background:#eff1f4"></div>
<div class="a" style="left:142.40px;top:395px;font-size:7.7px;line-height:7.7px;color:#3d98d8;font-weight:normal;-webkit-text-stroke-width:0.2px;">Alika Mendez</div>
<div class="a" style="left:141.00px;top:407.45px;width:80.00px;height:6.50px;background:linear-gradient(90deg,#e3e6ea 0%,#dfe2e6 50%,#e6e8eb 80%,rgba(230,232,235,0) 100%);border-radius:3px;filter:blur(2px)"></div>
<div class="a" style="left:348.90px;top:396px;font-size:8.15px;line-height:8.15px;color:#4b5563;font-weight:normal;-webkit-text-stroke-width:0.2px;">March 27, 2025</div>
<div class="a" style="left:348.90px;top:407px;font-size:6.8px;line-height:6.8px;color:#9ca3af;font-weight:normal;-webkit-text-stroke-width:0.2px;">04:59 PM (IST)</div>
<div class="a" style="left:506.80px;top:400px;font-size:7.85px;line-height:7.85px;color:#6b7280;font-weight:normal;-webkit-text-stroke-width:0.2px;">15 day Payout</div>
<div class="a" style="left:658.50px;top:397.75px;width:27.50px;height:12.00px;background:#effcf3;border:1px solid #8fe0aa;border-radius:6px"></div>
<div class="a" style="left:662.70px;top:400px;font-size:7.0px;line-height:7.0px;color:#1f9d55;font-weight:normal;-webkit-text-stroke-width:0.2px;">Active</div>
<div class="a" style="left:746.50px;top:400px;font-size:7.97px;line-height:7.97px;color:#6b7280;font-weight:normal;-webkit-text-stroke-width:0.2px;">Rs1,220</div>
<div class="a" style="left:849.30px;top:399.35px;width:1.60px;height:1.70px;background:#2a3241;border-radius:0.4px"></div>
<div class="a" style="left:849.30px;top:402.60px;width:1.60px;height:1.70px;background:#2a3241;border-radius:0.4px"></div>
<div class="a" style="left:849.30px;top:405.85px;width:1.60px;height:1.70px;background:#2a3241;border-radius:0.4px"></div>
<div class="a" style="left:136.70px;top:419.65px;width:765.70px;height:1.00px;background:#eff1f4"></div>
<div class="a" style="left:142.40px;top:428px;font-size:7.7px;line-height:7.7px;color:#3d98d8;font-weight:normal;-webkit-text-stroke-width:0.2px;">Pandora Lane</div>
<div class="a" style="left:141.00px;top:439.90px;width:79.00px;height:6.50px;background:linear-gradient(90deg,#e3e6ea 0%,#dfe2e6 50%,#e6e8eb 80%,rgba(230,232,235,0) 100%);border-radius:3px;filter:blur(2px)"></div>
<div class="a" style="left:348.90px;top:428px;font-size:8.15px;line-height:8.15px;color:#4b5563;font-weight:normal;-webkit-text-stroke-width:0.2px;">March 25, 2025</div>
<div class="a" style="left:348.90px;top:439px;font-size:6.8px;line-height:6.8px;color:#9ca3af;font-weight:normal;-webkit-text-stroke-width:0.2px;">10:42 AM (IST)</div>
<div class="a" style="left:506.80px;top:433px;font-size:7.85px;line-height:7.85px;color:#6b7280;font-weight:normal;-webkit-text-stroke-width:0.2px;">15 day Payout</div>
<div class="a" style="left:658.50px;top:430.20px;width:27.50px;height:12.00px;background:#effcf3;border:1px solid #8fe0aa;border-radius:6px"></div>
<div class="a" style="left:662.70px;top:433px;font-size:7.0px;line-height:7.0px;color:#1f9d55;font-weight:normal;-webkit-text-stroke-width:0.2px;">Active</div>
<div class="a" style="left:746.50px;top:433px;font-size:7.97px;line-height:7.97px;color:#6b7280;font-weight:normal;-webkit-text-stroke-width:0.2px;">Rs1,400</div>
<div class="a" style="left:849.30px;top:431.80px;width:1.60px;height:1.70px;background:#2a3241;border-radius:0.4px"></div>
<div class="a" style="left:849.30px;top:435.05px;width:1.60px;height:1.70px;background:#2a3241;border-radius:0.4px"></div>
<div class="a" style="left:849.30px;top:438.30px;width:1.60px;height:1.70px;background:#2a3241;border-radius:0.4px"></div>
<div class="a" style="left:136.70px;top:452.10px;width:765.70px;height:1.00px;background:#eff1f4"></div>
<div class="a" style="left:840.90px;top:362.40px;width:19.10px;height:18.20px;border:1.2px solid #f26b6b;border-radius:1px"></div>
<div class="a" style="left:780.70px;top:458.40px;width:45.90px;height:19.30px;background:#fff;border:1px solid #eceef1;border-radius:4px"></div>
<div class="a" style="left:788.60px;top:464px;font-size:7.8px;line-height:7.8px;color:#6b7280;font-weight:normal;-webkit-text-stroke-width:0.1px;">Previous</div>
<div class="a" style="left:833.20px;top:460.20px;width:15.50px;height:14.90px;background:#fff;border:1px solid #4f8ff7;border-radius:2px"></div>
<div class="a" style="left:839.00px;top:464px;font-size:7.8px;line-height:7.8px;color:#3b82f6;font-weight:normal;-webkit-text-stroke-width:0px;">1</div>
<div class="a" style="left:855.20px;top:458.40px;width:31.70px;height:19.30px;background:#fff;border:1px solid #eceef1;border-radius:4px"></div>
<div class="a" style="left:862.80px;top:464px;font-size:7.9px;line-height:7.9px;color:#6b7280;font-weight:normal;-webkit-text-stroke-width:0.1px;">Next</div>
<div class="a" style="left:792.80px;top:245.90px;width:115.00px;height:112.70px;background:#fff;border-radius:4px;box-shadow:0 6px 20px rgba(16,24,40,0.09),0 1px 3px rgba(16,24,40,0.10)"></div>
<svg class="a" style="left:797.51px;top:253.50px" width="9.38" height="7.2" viewBox="0 0 24 18" fill="none" stroke="#505968" stroke-width="2.6" stroke-linecap="round" stroke-linejoin="round" preserveAspectRatio="none"><rect x="1.5" y="1.5" width="21" height="15" rx="3"/><path d="M1.5 9h21M12 5v8M15 6h4M15 12h4"/></svg>
<div class="a" style="left:812.10px;top:254px;font-size:7.82px;line-height:7.82px;color:#374151;font-weight:normal;-webkit-text-stroke-width:0.2px;">Add Manual Commission</div>
<svg class="a" style="left:797.62px;top:271.43px" width="9.05" height="8.84" viewBox="0 0 24 24" fill="none" stroke="#505968" stroke-width="2.6" stroke-linecap="round" stroke-linejoin="round" preserveAspectRatio="none"><circle cx="12" cy="12" r="10.5"/><path d="M7.5 12h9"/></svg>
<div class="a" style="left:812.10px;top:272px;font-size:7.82px;line-height:7.82px;color:#374151;font-weight:normal;-webkit-text-stroke-width:0.2px;">Disable Customer</div>
<svg class="a" style="left:798.60px;top:289.89px" width="7.31" height="6.41" viewBox="0 0 24 21" fill="none" stroke="#505968" stroke-width="2.6" stroke-linecap="round" stroke-linejoin="round" preserveAspectRatio="none"><path d="M1.5 5.5h19M16.5 1.5l4 4-4 4M22.5 15.5h-19M7.5 11.5l-4 4 4 4"/></svg>
<div class="a" style="left:812.10px;top:290px;font-size:7.82px;line-height:7.82px;color:#374151;font-weight:normal;-webkit-text-stroke-width:0.2px;">Add Split Commission</div>
<svg class="a" style="left:798.37px;top:308.09px" width="7.96" height="6.22" viewBox="0 0 24 20" fill="none" stroke="#505968" stroke-width="2.6" stroke-linecap="round" stroke-linejoin="round" preserveAspectRatio="none"><path d="M8 2.5h14.5M8 10h14.5M8 17.5h14.5"/><circle cx="2.5" cy="2.5" r="1.6" fill="#4b5563"/><circle cx="2.5" cy="10" r="1.6" fill="#4b5563"/><circle cx="2.5" cy="17.5" r="1.6" fill="#4b5563"/></svg>
<div class="a" style="left:812.10px;top:308px;font-size:7.82px;line-height:7.82px;color:#374151;font-weight:normal;-webkit-text-stroke-width:0.2px;">View Commissions</div>
<svg class="a" style="left:798.60px;top:325.69px" width="7.31" height="7.02" viewBox="0 0 24 22.5" fill="none" stroke="#505968" stroke-width="2.6" stroke-linecap="round" stroke-linejoin="round" preserveAspectRatio="none"><path d="M1.5 5h11M9.5 1.5l3.5 3.5-3.5 3.5M1.5 17h21M18.5 13l4 4-4 4"/></svg>
<div class="a" style="left:812.10px;top:326px;font-size:7.82px;line-height:7.82px;color:#374151;font-weight:normal;-webkit-text-stroke-width:0.2px;">Move Customer</div>
<svg class="a" style="left:798.77px;top:343.32px" width="7.15" height="9.05" viewBox="0 0 22 24" fill="none" stroke="#505968" stroke-width="2.6" stroke-linecap="round" stroke-linejoin="round" preserveAspectRatio="none"><path d="M1.5 5.5h19M7 5.5V2.5h8v3M3.5 5.5l1.3 15a2 2 0 0 0 2 1.8h8.4a2 2 0 0 0 2-1.8l1.3-15"/><path d="M9 11.5l2 2 3-3.5"/></svg>
<div class="a" style="left:812.10px;top:344px;font-size:7.82px;line-height:7.82px;color:#374151;font-weight:normal;-webkit-text-stroke-width:0.2px;">Delete Customer</div>
<div class="a" style="left:793.80px;top:320.50px;width:114.00px;height:17.90px;border:1px solid #f26b6b;border-radius:1px"></div>
</div>
</body></html>
